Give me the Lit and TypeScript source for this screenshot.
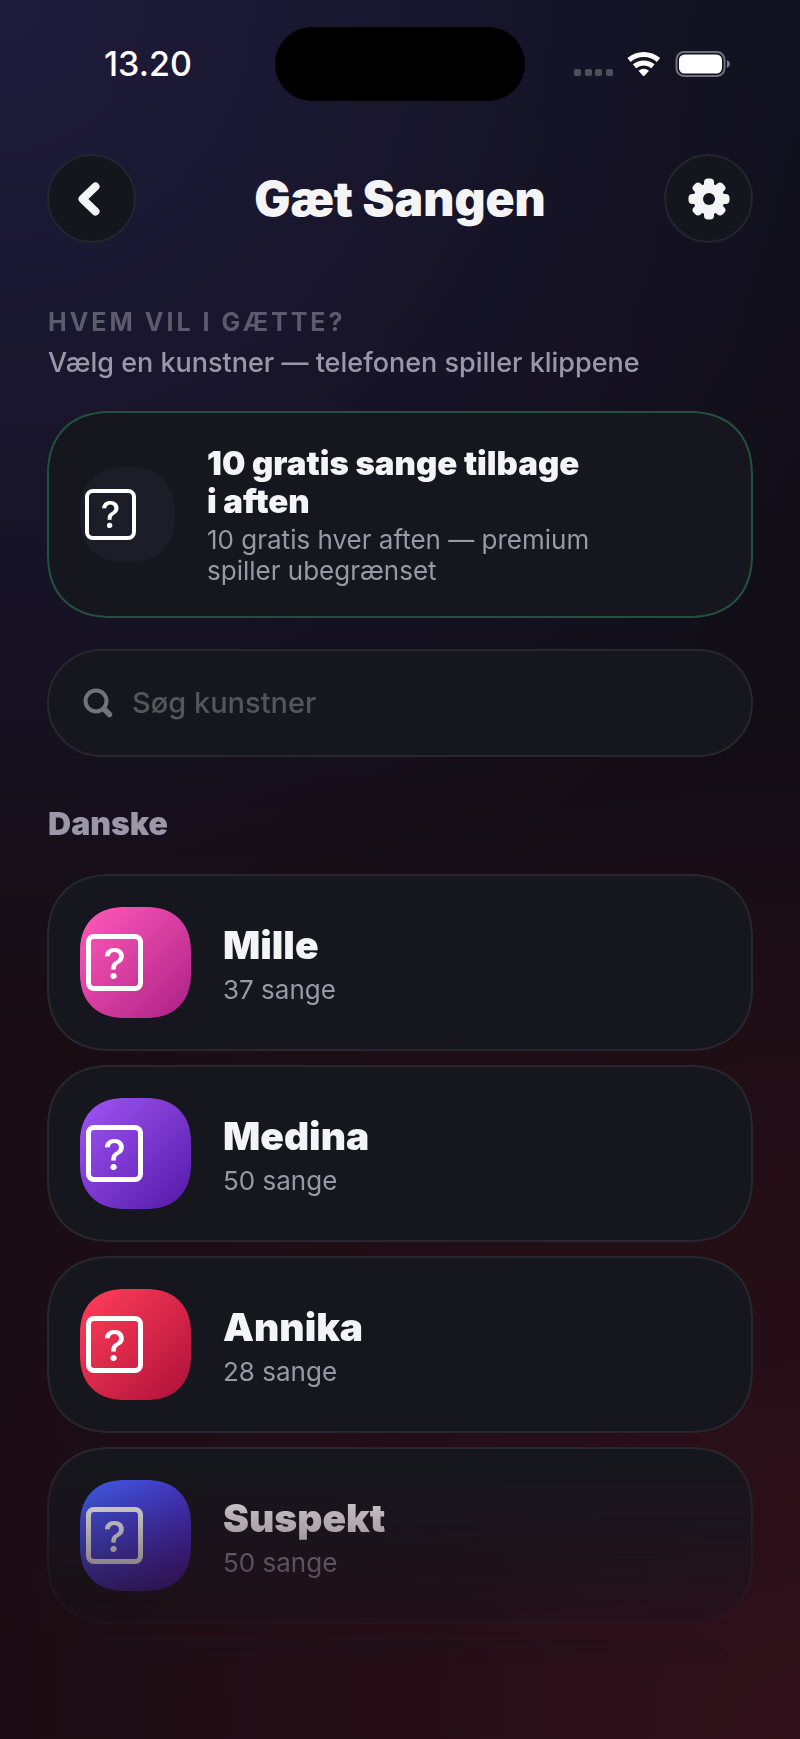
import { LitElement, css, html, svg } from 'lit'
import { customElement, property } from 'lit/decorators.js'

type TileColor = 'pink' | 'purple' | 'red' | 'blue' | 'muted'

interface Artist {
  name: string
  songs: number
  color: TileColor
}

const artists: Artist[] = [
  { name: 'Mille', songs: 37, color: 'pink' },
  { name: 'Medina', songs: 50, color: 'purple' },
  { name: 'Annika', songs: 28, color: 'red' },
  { name: 'Suspekt', songs: 50, color: 'blue' },
]

@customElement('icon-tile')
export class IconTile extends LitElement {
  @property({ type: String })
  color: TileColor = 'muted'

  render() {
    return html`<div class="tile ${this.color}"><span class="glyph">?</span></div>`
  }

  static styles = css`
    :host {
      display: block;
      flex: none;
    }

    .tile {
      box-sizing: border-box;
      width: 111px;
      height: 111px;
      padding-left: 6px;
      display: flex;
      align-items: center;
      border-radius: 40px;
    }

    @supports (corner-shape: squircle) {
      .tile {
        border-radius: 45px;
        corner-shape: superellipse(1.2);
      }
    }

    .glyph {
      box-sizing: border-box;
      width: 57px;
      height: 57px;
      display: flex;
      align-items: center;
      justify-content: center;
      border: 5px solid #fff;
      border-radius: 8px;
      color: #fff;
      font: 500 43px/48px Inter, sans-serif;
    }

    .muted {
      width: 95px;
      height: 95px;
      padding-left: 5px;
      background: #1d1d28;
    }

    .muted .glyph {
      width: 51px;
      height: 51px;
      border-width: 4px;
      font-size: 37px;
    }

    .pink {
      background: linear-gradient(135deg, #fa56b6 8%, #b02388 95%);
    }

    .purple {
      background: linear-gradient(135deg, #9b50ee 8%, #571cac 95%);
    }

    .red {
      background: linear-gradient(135deg, #fb3b57 8%, #b2123b 95%);
    }

    .blue {
      background: linear-gradient(135deg, #4463ff 5%, #4a1cb4 90%);
    }
  `
}

@customElement('app-root')
export class AppRoot extends LitElement {
  renderStatus() {
    return html`
      <div class="status">
        <span class="time">13.20</span>
        <div class="island"></div>
        <svg class="signals" width="156" height="26" viewBox="0 0 156 26" aria-hidden="true">
          <g fill="#fff" opacity="0.25">
            ${[0, 11, 21, 32].map((x) => svg`<rect x=${x} y="18" width="7" height="7" rx="2" />`)}
          </g>
          <g fill="none" stroke="#fff" stroke-width="5">
            <path d="M55 9 A22.500 22.500 0 0 1 84.500 9" />
            <path d="M60.500 15.300 A14.500 14.500 0 0 1 79 15.300" />
          </g>
          <path d="M64.500 19.800 Q69.700 15.700 75 19.800 L70.700 24.400 Q69.700 25.400 68.700 24.400 Z" fill="#fff" />
          <rect x="102.500" y="1" width="48" height="24" rx="7.500" fill="none" stroke="#fff" stroke-opacity="0.4" stroke-width="2" />
          <rect x="105" y="3.500" width="43" height="19" rx="5.500" fill="#fff" />
          <path d="M153 9 Q156 10.500 156 13 Q156 15.500 153 17 Z" fill="#fff" opacity="0.45" />
        </svg>
      </div>
    `
  }

  renderHeader() {
    return html`
      <header class="header">
        <button class="round" aria-label="Tilbage">
          <svg width="44" height="44" viewBox="0 0 44 44">
            <path d="M25.500 9.500 L12.500 22 L25.500 34.500" fill="none" stroke="#f4f4f7" stroke-width="8" stroke-linecap="round" stroke-linejoin="round" />
          </svg>
        </button>
        <h1 class="title">Gæt Sangen</h1>
        <button class="round" aria-label="Indstillinger">
          <svg width="44" height="44" viewBox="-22 -22 44 44" fill="#f4f4f7">
            ${[0, 45, 90, 135].map(
              (deg) => svg`<rect x="-5" y="-20.500" width="10" height="41" rx="4" transform="rotate(${deg})" />`
            )}
            <circle r="15.500" />
            <circle r="6" fill="#15161d" />
          </svg>
        </button>
      </header>
    `
  }

  render() {
    return html`
      <div class="screen">
        ${this.renderStatus()} ${this.renderHeader()}
        <main class="scroller">
          <p class="eyebrow">HVEM VIL I GÆTTE?</p>
          <p class="lead">Vælg en kunstner — telefonen spiller klippene</p>

          <section class="card quota">
            <icon-tile></icon-tile>
            <div class="texts">
              <h2 class="quota-title">10 gratis sange tilbage<br />i aften</h2>
              <p class="detail">10 gratis hver aften — premium<br />spiller ubegrænset</p>
            </div>
          </section>

          <label class="card search">
            <svg class="loupe" width="32" height="32" viewBox="0 0 32 32" fill="none" stroke="#737379" stroke-linecap="round" aria-hidden="true">
              <circle cx="14" cy="14" r="10.500" stroke-width="4" />
              <path d="M22 22 L27.500 27.500" stroke-width="5.500" />
            </svg>
            <input class="field" type="text" placeholder="Søg kunstner" aria-label="Søg kunstner" />
          </label>

          <h2 class="group">Danske</h2>
          <ul class="artists">
            ${artists.map(
              (artist) => html`
                <li class="card artist">
                  <icon-tile color=${artist.color}></icon-tile>
                  <div class="texts">
                    <h3 class="name">${artist.name}</h3>
                    <p class="detail">${artist.songs} sange</p>
                  </div>
                </li>
              `
            )}
            <li class="card artist"></li>
          </ul>
        </main>
      </div>
    `
  }

  static styles = css`
    :host {
      display: block;
      font-family: Inter, sans-serif;
      color: #f4f4f7;
    }

    h1,
    h2,
    h3,
    p,
    ul {
      margin: 0;
      padding: 0;
    }

    .screen {
      box-sizing: border-box;
      height: 100vh;
      padding-bottom: 76px;
      display: flex;
      flex-direction: column;
      background:
        radial-gradient(circle at 0 0, #1f1b3c 0, #1f1b3c00 1000px),
        radial-gradient(circle at 100% 100%, #30101a 0, #30101a00 1000px),
        linear-gradient(#0e0e17, #120d16 40%, #190d13 60%, #160c11);
    }

    .status {
      flex: none;
      display: grid;
      grid-template-columns: 1fr 250px 1fr;
      align-items: center;
      padding-top: 27px;
    }

    .time {
      padding-left: 104px;
      font-size: 34px;
      line-height: 42px;
      font-weight: 500;
      color: #fff;
    }

    .island {
      height: 74px;
      border-radius: 37px;
      background: #000;
    }

    .signals {
      justify-self: end;
      margin-right: 70px;
    }

    .header {
      flex: none;
      display: flex;
      align-items: center;
      justify-content: space-between;
      padding: 53px 47px 0;
    }

    .round {
      box-sizing: border-box;
      width: 89px;
      height: 89px;
      padding: 0;
      display: flex;
      align-items: center;
      justify-content: center;
      border: 2px solid #26252f;
      border-radius: 50%;
      background: #15161d;
    }

    .title {
      font-size: 48px;
      line-height: 56px;
      font-weight: 900;
    }

    .scroller {
      flex: 1;
      min-height: 0;
      overflow: hidden auto;
      scrollbar-width: none;
      padding: 63px 47px 0;
      mask-image: linear-gradient(#000 calc(100% - 208px), transparent calc(100% + 8px));
    }

    .eyebrow {
      padding-left: 1px;
      font-size: 25px;
      line-height: 32px;
      font-weight: 700;
      letter-spacing: 3px;
      color: #5d5b6b;
    }

    .lead {
      margin-top: 6px;
      padding-left: 1px;
      font-size: 27px;
      line-height: 38px;
      font-weight: 500;
      color: #9a98a8;
    }

    .card {
      box-sizing: border-box;
      display: flex;
      align-items: center;
      padding: 0 31px;
      border: 2px solid #29272e;
      border-radius: 58px;
      background: #16171e;
    }

    @supports (corner-shape: squircle) {
      .card {
        border-radius: 64px;
        corner-shape: superellipse(1.2);
      }
    }

    .texts {
      display: flex;
      flex-direction: column;
      gap: 4px;
    }

    .quota {
      gap: 32px;
      min-height: 207px;
      margin-top: 29px;
      border-color: #23503f;
    }

    .quota-title {
      font-size: 33px;
      line-height: 38px;
      font-weight: 900;
    }

    .detail {
      font-size: 26px;
      line-height: 31px;
      color: #9a98a5;
    }

    .search {
      gap: 18px;
      min-height: 108px;
      margin-top: 31px;
      padding: 0 33px;
      border-radius: 54px;
      corner-shape: round;
    }

    .loupe {
      flex: none;
    }

    .field {
      flex: 1;
      min-width: 0;
      padding: 0;
      border: 0;
      outline: 0;
      background: none;
      color: #f4f4f7;
      font: 500 29px/36px Inter, sans-serif;
    }

    .field::placeholder {
      color: #55555c;
      opacity: 1;
    }

    .group {
      margin-top: 48px;
      padding-left: 1px;
      font-size: 32px;
      line-height: 38px;
      font-weight: 900;
      color: #9a98a8;
    }

    .artists {
      display: flex;
      flex-direction: column;
      gap: 14px;
      margin-top: 31px;
      list-style: none;
    }

    .artist {
      gap: 32px;
      min-height: 177px;
    }

    .name {
      font-size: 39px;
      line-height: 50px;
      font-weight: 900;
    }
  `
}
